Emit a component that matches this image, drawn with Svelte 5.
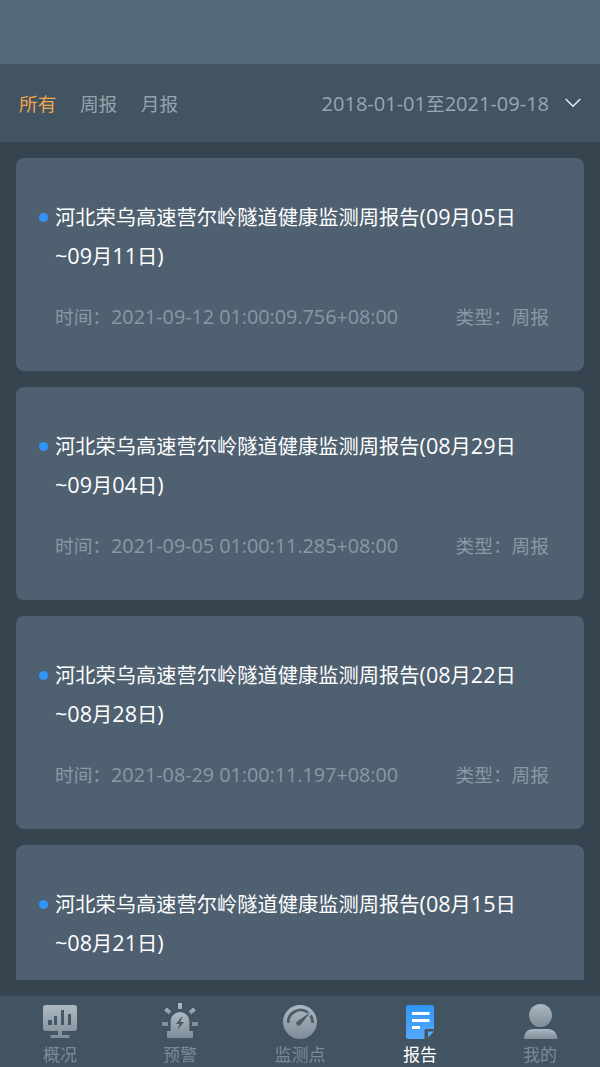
<script>
  const filters = ['所有', '周报', '月报'];
  const reports = [
    { title: ['河北荣乌高速营尔岭隧道健康监测周报告(09月05日', '~09月11日)'], time: '2021-09-12 01:00:09.756+08:00' },
    { title: ['河北荣乌高速营尔岭隧道健康监测周报告(08月29日', '~09月04日)'], time: '2021-09-05 01:00:11.285+08:00' },
    { title: ['河北荣乌高速营尔岭隧道健康监测周报告(08月22日', '~08月28日)'], time: '2021-08-29 01:00:11.197+08:00' },
    { title: ['河北荣乌高速营尔岭隧道健康监测周报告(08月15日', '~08月21日)'] }
  ];

  // latin runs are set a bit larger than the cjk around them
  function parts(s) {
    return s.match(/[\x00-\x7f]+|[^\x00-\x7f]+/g);
  }
  const isLatin = (s) => s.charCodeAt(0) < 128;
</script>

{#snippet mixed(s)}
  {#each parts(s) as p}{#if isLatin(p)}<span class="num">{p}</span>{:else}{p}{/if}{/each}
{/snippet}

<div class="page">
  <header class="top"></header>

  <div class="filters">
    <div class="tabs">
      {#each filters as f, i}
        <span class="tab" class:on={i === 0}>{f}</span>
      {/each}
    </div>
    <div class="range">
      <span>{@render mixed('2018-01-01至2021-09-18')}</span>
      <svg width="16" height="10" viewBox="0 0 16 10"><path d="M.7 1l7.300 7.300L15.300 1" fill="none" stroke="#e8ecef" stroke-width="1.500" /></svg>
    </div>
  </div>

  <div class="list">
    {#each reports as r}
      <div class="card">
        <div class="title">
          <i class="dot"></i>
          {#each r.title as line}
            <div>{@render mixed(line)}</div>
          {/each}
        </div>
        {#if r.time}
          <div class="meta">
            <span>时间：<span class="num">{r.time}</span></span>
            <span>类型：周报</span>
          </div>
        {/if}
      </div>
    {/each}
  </div>

  <nav class="bar">
    <div class="item">
      <svg width="36" height="36" viewBox="0 -2 36 36">
        <defs>
          <linearGradient id="g" x1="0" y1="0" x2="0" y2="1">
            <stop offset="0" stop-color="#aeb9c1" />
            <stop offset="1" stop-color="#7f8d99" />
          </linearGradient>
        </defs>
        <path fill="url(#g)" d="M4 0h28a3 3 0 0 1 3 3v20a3 3 0 0 1-3 3H20v4h7.500v3h-19v-3H16v-4H4a3 3 0 0 1-3-3V3a3 3 0 0 1 3-3z" />
        <path fill="#465765" d="M6 15h4v5H6zM12 11h3v9h-3zM19 5h3v15h-3zM26 9h3v11h-3z" />
      </svg>
      <span>概况</span>
    </div>
    <div class="item">
      <svg width="36" height="36" viewBox="0 -2 36 36">
        <path fill="url(#g)" d="M5 33v-7h3.700v-9.500a9.300 9.500 0 0 1 18.600 0V26H31v7z" />
        <path fill="#465765" d="M19.500 12l-5.500 7h3.500l-2 6 6.500-8h-3.800l2.300-5z" />
        <path fill="url(#g)" d="M16 -2h4v6h-4zM0 17h6v4H0zM30 17h6v4h-6z" />
        <path fill="url(#g)" d="M4.800 2.500l-2.600 2.900 4.600 4 2.600-2.900zM31.200 2.500l2.600 2.900-4.600 4-2.600-2.900z" />
      </svg>
      <span>预警</span>
    </div>
    <div class="item">
      <svg width="36" height="36" viewBox="0 -2 36 36">
        <circle cx="18" cy="17" r="17" fill="url(#g)" />
        <path d="M6.300 18a12.300 12.300 0 0 1 19.700-10.500" fill="none" stroke="#4c5d6c" stroke-width="2.800" />
        <path d="M28.500 10.500a12.300 12.300 0 0 1 2.100 7.500" fill="none" stroke="#4c5d6c" stroke-width="2.800" />
        <path d="M15 16.500L28.700 7l-10.200 13a2.400 2.400 0 0 1-3.500-3.500z" fill="#4c5d6c" />
      </svg>
      <span>监测点</span>
    </div>
    <div class="item active">
      <svg width="36" height="36" viewBox="0 -2 36 36">
        <defs>
          <linearGradient id="b" x1="0" y1="0" x2="0" y2="1">
            <stop offset="0" stop-color="#2f95f8" />
            <stop offset="1" stop-color="#54aafb" />
          </linearGradient>
        </defs>
        <path fill="url(#b)" d="M6.500 0h23a2.500 2.500 0 0 1 2.500 2.500V24h-8a1.500 1.500 0 0 0-1.500 1.500V34h-16A2.500 2.500 0 0 1 4 31.500v-29A2.500 2.500 0 0 1 6.500 0z" />
        <path fill="#fff" d="M10 7h17.500v3H10zM10 14h17.500v3H10zM10 21h8v3h-8z" />
        <path fill="#54aafb" d="M26 26.500h6L26 32.500z" />
      </svg>
      <span>报告</span>
    </div>
    <div class="item">
      <svg width="36" height="36" viewBox="0 -2 36 36">
        <circle cx="18.500" cy="10.500" r="11.500" fill="url(#g)" />
        <path fill="url(#g)" d="M2 34c0-6 3.500-10 9-10h15c5.500 0 9 4 9.500 10z" />
      </svg>
      <span>我的</span>
    </div>
  </nav>
</div>

<style>
  :global(body) {
    margin: 0;
    background: #36444f;
  }

  .page {
    width: 600px;
    height: 1067px;
    display: flex;
    flex-direction: column;
    overflow: hidden;
    background: #36444f;
    font-family: "Open Sans", "Noto Sans CJK SC", sans-serif;
  }

  .top {
    height: 64px;
    flex-shrink: 0;
    background: #556878;
  }

  .filters {
    height: 78px;
    flex-shrink: 0;
    display: flex;
    align-items: center;
    justify-content: space-between;
    padding: 0 19px;
    box-sizing: border-box;
    background: #425362;
  }

  .tabs {
    display: flex;
    gap: 23.500px;
    margin-bottom: 2px;
  }

  .tab {
    font-size: 18.700px;
    color: #96a2ac;
  }

  .tab.on {
    color: #eda64f;
  }

  .range {
    display: flex;
    align-items: center;
    gap: 16px;
    font-size: 18.700px;
    color: #9aa6b0;
  }

  .range .num {
    font-size: 20px;
  }

  .range svg {
    margin-bottom: 1px;
  }

  .list {
    height: 822px;
    margin-top: 16px;
    flex-shrink: 0;
    overflow: hidden;
    display: flex;
    flex-direction: column;
    gap: 16px;
    padding: 0 16px;
  }

  .card {
    height: 213px;
    flex-shrink: 0;
    box-sizing: border-box;
    padding: 40px 35px 0 39px;
    background: #4f6071;
    border-radius: 8px;
  }

  .title {
    position: relative;
    font-size: 20.250px;
    line-height: 39px;
    color: #fff;
  }

  .title .num {
    font-size: 21.600px;
    line-height: 1;
  }

  .dot {
    position: absolute;
    left: -16px;
    top: 15px;
    width: 9px;
    height: 9px;
    border-radius: 50%;
    background: #2f95f8;
  }

  .meta {
    display: flex;
    justify-content: space-between;
    margin-top: 21px;
    font-size: 18.700px;
    line-height: 39px;
    color: #8b98a3;
  }

  .meta .num {
    font-size: 19.750px;
    line-height: 1;
  }

  .bar {
    margin-top: 15px;
    flex: 1;
    display: flex;
    background: #425362;
    border-top: 1px solid #3a4956;
  }

  .item {
    flex: 1;
    display: flex;
    flex-direction: column;
    align-items: center;
    padding-top: 7px;
    font-size: 17px;
    line-height: 22px;
    color: #7d8a96;
  }

  .item svg {
    display: block;
    margin-bottom: 5px;
  }

  .item.active {
    color: #fff;
  }
</style>
